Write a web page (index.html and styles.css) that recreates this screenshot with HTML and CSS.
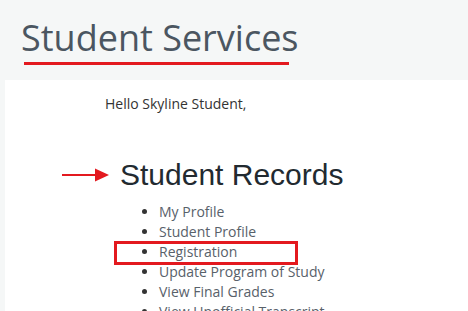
FILE: index.html
```html
<!DOCTYPE html>
<html>
<head>
<meta charset="utf-8">
<link rel="stylesheet" href="styles.css">
</head>
<body>
<header class="page-header">
  <h1 class="page-title">Student Services</h1>
  <div class="title-rule"></div>
</header>
<main class="panel">
  <p class="greeting">Hello Skyline Student,</p>
  <div class="section-head">
    <svg class="arrow" width="48" height="14" viewBox="0 0 48 14">
      <rect x="0" y="6" width="34" height="2" fill="#e3191f"/>
      <polygon points="33,0.5 47,7 33,13.5" fill="#e3191f"/>
    </svg>
    <h2 class="section-title">Student Records</h2>
  </div>
  <ul class="links">
    <li>My Profile</li>
    <li>Student Profile</li>
    <li class="highlight">Registration</li>
    <li>Update Program of Study</li>
    <li>View Final Grades</li>
    <li>View Unofficial Transcript</li>
  </ul>
</main>
</body>
</html>
```
FILE: styles.css
```css
html, body {
  margin: 0;
  padding: 0;
  height: 100%;
  overflow: hidden;
}
body {
  background: #f5f7f7;
  font-family: "Open Sans", "Liberation Sans", sans-serif;
}
.page-header {
  padding: 14px 0 15px 21px;
}
.page-title {
  margin: 0;
  font-family: "Open Sans", sans-serif;
  font-weight: 400;
  font-size: 36px;
  line-height: 48px;
  color: #4b5661;
}
.title-rule {
  margin-left: 3px;
  width: 265px;
  height: 3px;
  background: #e3191f;
}
.panel {
  margin-left: 5px;
  background: #ffffff;
  padding: 14px 0 0 0;
  min-height: 300px;
}
.greeting {
  margin: 0 0 0 100px;
  font-size: 14px;
  line-height: 20px;
  color: #333333;
}
.section-head {
  display: flex;
  align-items: center;
  margin: 43px 0 0 57px;
  gap: 10px;
}
.section-title {
  margin: 0;
  font-family: "Liberation Sans", Arial, sans-serif;
  font-weight: 400;
  font-size: 30px;
  line-height: 36px;
  color: #222a30;
}
.links {
  margin: 9px 0 0 0;
  padding: 0 0 0 154px;
  font-size: 14px;
  line-height: 20px;
  color: #58616a;
}
.links li::marker {
  color: #333333;
}
.highlight {
  position: relative;
}
.highlight::before {
  content: "";
  position: absolute;
  left: -45px;
  top: -1px;
  width: 178px;
  height: 18px;
  border: 3px solid #e3191f;
}
```
